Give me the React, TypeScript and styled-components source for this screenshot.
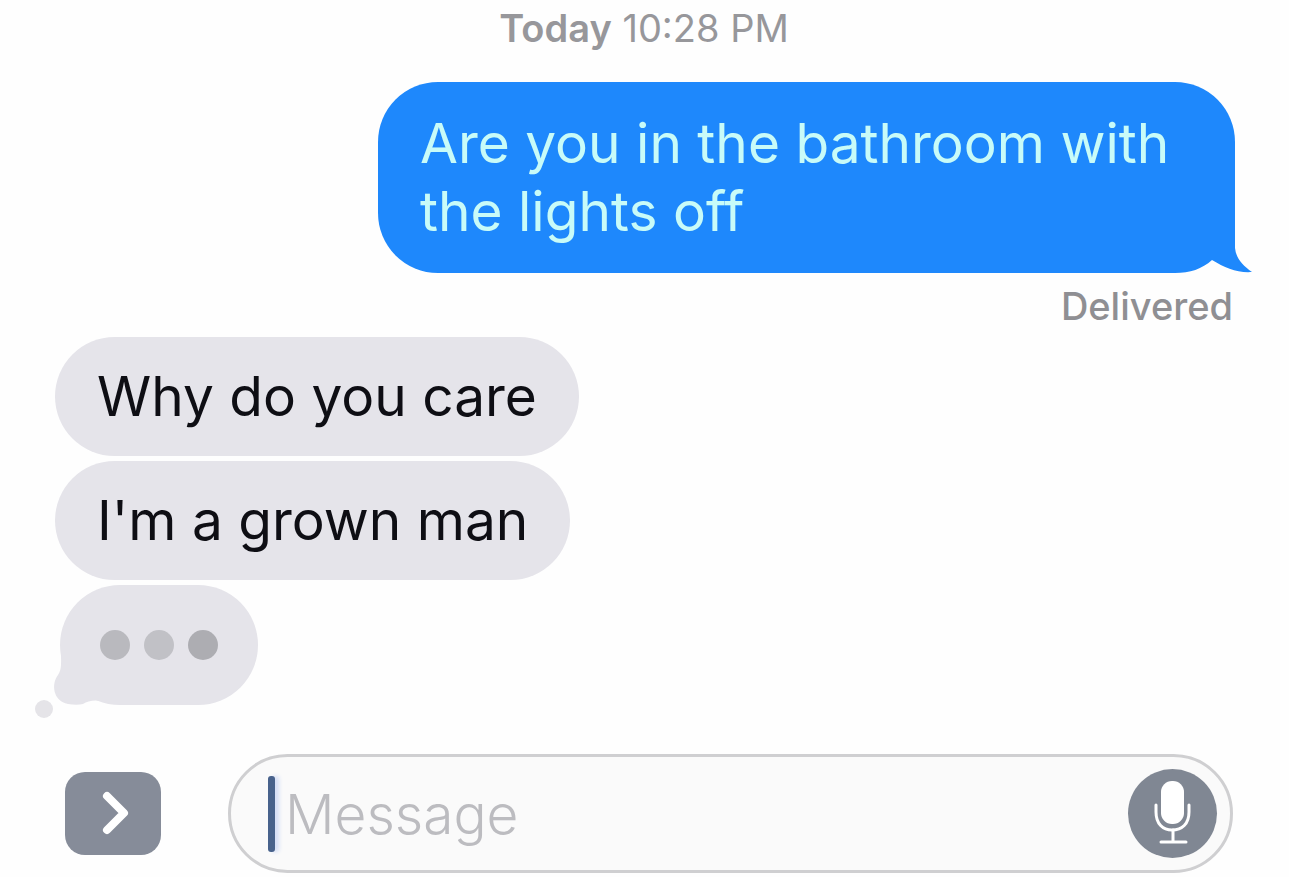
import React from "react";
import styled, { createGlobalStyle } from "styled-components";

const GlobalStyle = createGlobalStyle`
  * { box-sizing: border-box; }
  body {
    margin: 0;
    background: #fefefe;
    color: #0e0e14;
    font-family: Inter, "Liberation Sans", sans-serif;
  }
`;

const Screen = styled.div`
  display: flex;
  flex-direction: column;
  min-height: 100vh;
  padding: 8px 56px 4px 55px;
`;

const Timestamp = styled.time`
  display: block;
  text-align: center;
  font-size: 38px;
  line-height: 40px;
  color: #97979b;

  strong { font-weight: 600; }
`;

const Thread = styled.main`
  display: flex;
  flex-direction: column;
  flex: 1;
  padding-top: 34px;
`;

const Bubble = styled.p<{ $sent?: boolean }>`
  position: relative;
  align-self: ${(p) => (p.$sent ? "flex-end" : "flex-start")};
  max-width: min(857px, 100%);
  margin: 0 ${(p) => (p.$sent ? "-2px" : "0")} ${(p) => (p.$sent ? "0" : "5px")} 0;
  padding: ${(p) => (p.$sent ? "27px 42px 28px" : "25px 42px 26px")};
  border-radius: 60px;
  background: ${(p) => (p.$sent ? "#1e88fc" : "#e5e4ea")};
  color: ${(p) => (p.$sent ? "#c8fbf8" : "#0e0e14")};
  font-size: 55px;
  line-height: 68px;
`;

const Tail = styled.svg`
  position: absolute;
  right: -17px;
  bottom: 0;
  width: 77px;
  height: 68px;
`;

const Status = styled.div`
  align-self: flex-end;
  margin-bottom: 11px;
  padding-top: 13px;
  font-size: 38px;
  font-weight: 500;
  line-height: 40px;
  color: #8f8f93;
`;

const Typing = styled.div`
  position: relative;
  display: flex;
  align-items: center;
  gap: 14px;
  width: 198px;
  height: 120px;
  margin-left: 5px;
  padding-left: 40px;
  border-radius: 60px;
  background: #e5e4ea;
`;

const Dot = styled.span<{ $tone: string }>`
  z-index: 1;
  width: 30px;
  height: 30px;
  border-radius: 50%;
  background: ${(p) => p.$tone};
`;

const TypingTail = styled.svg`
  position: absolute;
  left: -28px;
  bottom: -16px;
  width: 80px;
  height: 70px;
`;

const Composer = styled.form`
  display: flex;
  align-items: center;
  gap: 67px;
  padding-left: 10px;
`;

const DrawerButton = styled.button`
  display: flex;
  align-items: center;
  justify-content: center;
  width: 96px;
  height: 83px;
  padding: 0;
  border: 0;
  border-radius: 20px;
  background: #868c99;
`;

const Field = styled.label`
  display: flex;
  align-items: center;
  flex: 1;
  min-width: 0;
  height: 119px;
  padding: 0 13px 0 37px;
  border: 3px solid #cfcfd1;
  border-radius: 60px;
  background: #fafafa;
`;

const Caret = styled.span`
  width: 7px;
  height: 76px;
  border-radius: 3px;
  background: #48628c;
  box-shadow: 4px 0 4px #d3ddf6;
`;

const Input = styled.input`
  flex: 1;
  min-width: 0;
  padding: 0 0 0 10px;
  border: 0;
  outline: 0;
  background: transparent;
  font-family: inherit;
  font-size: 55px;
  line-height: 68px;
  font-weight: 300;
  color: #0e0e14;

  &::placeholder { color: #bcbcc0; opacity: 1; }
`;

const MicButton = styled.button`
  width: 89px;
  height: 89px;
  padding: 0;
  border: 0;
  border-radius: 50%;
  background: #808793;

  svg { display: block; }
`;

export default function App() {
  return (
    <Screen>
      <GlobalStyle />
      <Timestamp>
        <strong>Today</strong> 10:28 PM
      </Timestamp>
      <Thread>
        <Bubble $sent>
          Are you in the bathroom with the lights off
          <Tail viewBox="0 0 77 68" aria-hidden="true">
            <path d="M0 68 L77 68 L77 0 L60 0 L60 8 Z" fill="#fefefe" />
            <path d="M0 0 H60 V43 C61 53 67 60 77 67 C62 68 50 63 37 55 C27 64 15 68 0 68 Z" fill="#1e88fc" />
          </Tail>
        </Bubble>
        <Status>Delivered</Status>
        <Bubble>Why do you care</Bubble>
        <Bubble>I'm a grown man</Bubble>
        <Typing role="status" aria-label="Typing">
          <TypingTail viewBox="0 0 80 70" aria-hidden="true">
            <path d="M29 0 C29 12 30 18 26 24 C19 33 21 50 36 53 C42 54 47 54 51 53 C57 49 65 48 80 52 V0 Z" fill="#e5e4ea" />
            <circle cx="12" cy="58" r="9" fill="#e5e4e8" />
          </TypingTail>
          <Dot $tone="#b9b9be" />
          <Dot $tone="#c1c1c6" />
          <Dot $tone="#adadb2" />
        </Typing>
      </Thread>
      <Composer onSubmit={(e) => e.preventDefault()}>
        <DrawerButton type="button" aria-label="Show apps">
          <svg width="96" height="83" viewBox="0 0 96 83" fill="none" aria-hidden="true">
            <path d="M42 24 L59 41 L42 58" stroke="#fff" strokeWidth="8" strokeLinecap="round" strokeLinejoin="round" />
          </svg>
        </DrawerButton>
        <Field>
          <Caret />
          <Input type="text" placeholder="Message" aria-label="Message" />
          <MicButton type="button" aria-label="Dictate">
            <svg width="89" height="89" viewBox="0 0 89 89" fill="none" aria-hidden="true">
              <rect x="33" y="12" width="23" height="43" rx="11" fill="#fff" />
              <path d="M28 36 V43 C28 55 35 61 44 61 C54 61 61 55 61 43 V36" stroke="#fff" strokeWidth="3" strokeLinecap="round" />
              <path d="M45 61 V73 M33 73 H58" stroke="#fff" strokeWidth="3" strokeLinecap="round" />
            </svg>
          </MicButton>
        </Field>
      </Composer>
    </Screen>
  );
}
